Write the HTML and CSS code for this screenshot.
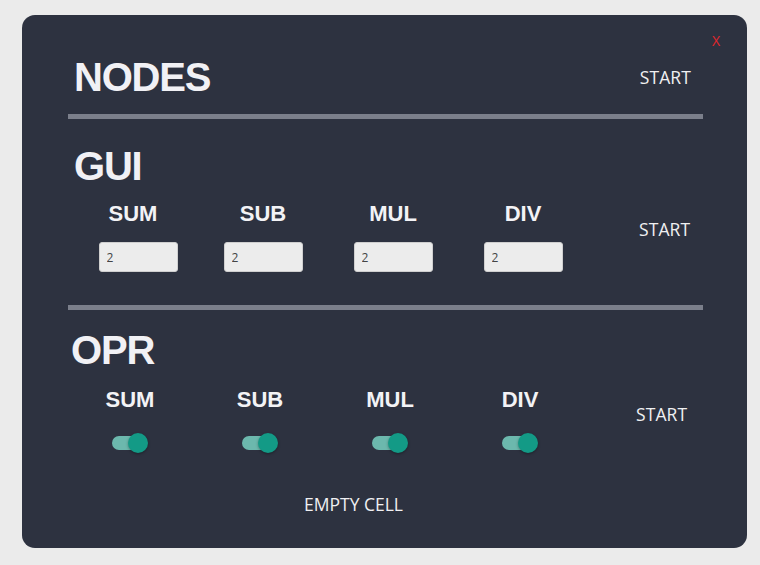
FILE: index.html
```html
<!DOCTYPE html>
<html>
<head>
<meta charset="utf-8">
<link rel="stylesheet" href="styles.css">
</head>
<body>
<div class="panel">
  <span class="close">X</span>
  <div class="header">
    <h1 class="title title--nodes">NODES</h1>
    <span class="start">START</span>
  </div>
  <div class="divider"></div>
  <section class="section section--gui">
    <h2 class="title">GUI</h2>
    <div class="grid">
      <div class="label">SUM</div>
      <div class="label">SUB</div>
      <div class="label">MUL</div>
      <div class="label">DIV</div>
      <span class="start start--grid">START</span>
      <div class="cell cell--first"><input class="num" type="text" value="2"></div>
      <div class="cell"><input class="num" type="text" value="2"></div>
      <div class="cell"><input class="num" type="text" value="2"></div>
      <div class="cell"><input class="num" type="text" value="2"></div>
    </div>
  </section>
  <div class="divider divider--second"></div>
  <section class="section section--opr">
    <h2 class="title">OPR</h2>
    <div class="grid grid--opr">
      <div class="label">SUM</div>
      <div class="label">SUB</div>
      <div class="label">MUL</div>
      <div class="label">DIV</div>
      <span class="start start--grid start--opr">START</span>
      <div class="cell"><span class="toggle"><span class="knob"></span></span></div>
      <div class="cell"><span class="toggle"><span class="knob"></span></span></div>
      <div class="cell"><span class="toggle"><span class="knob"></span></span></div>
      <div class="cell"><span class="toggle"><span class="knob"></span></span></div>
    </div>
    <div class="empty">EMPTY CELL</div>
  </section>
</div>
</body>
</html>
```
FILE: styles.css
```css
html, body {
  margin: 0;
  padding: 0;
  background: #ebebeb;
}
.panel {
  position: relative;
  box-sizing: border-box;
  margin: 15px 0 0 22px;
  width: 725px;
  height: 533px;
  background: #2d3240;
  border-radius: 13px;
  padding: 42px 44px 0 46px;
  color: #f2f2f4;
}
.close {
  position: absolute;
  left: 690px;
  top: 16px;
  font-family: "Open Sans", sans-serif;
  font-size: 14px;
  color: #e3262c;
}
.header {
  display: flex;
  align-items: center;
  height: 40px;
}
.title {
  margin: 0;
  font-family: "Liberation Sans", Arial, sans-serif;
  font-weight: bold;
  font-size: 40px;
  line-height: 40px;
  letter-spacing: -1.2px;
  color: #f1f1f5;
}
.title--nodes {
  margin-left: 6px;
  flex: 1;
}
.start {
  font-family: "Open Sans", sans-serif;
  font-size: 17.5px;
  color: #f0f0f2;
  letter-spacing: 0.1px;
}
.header .start {
  margin-right: 12px;
}
.divider {
  height: 5px;
  background: #7b7f8b;
  margin-top: 17px;
}
.section--gui {
  margin-top: 27px;
}
.section--gui .title {
  margin-left: 6px;
}
.divider--second {
  margin-top: 33px;
}
.section--opr {
  margin-top: 20px;
  margin-left: -3px;
}
.section--opr .title {
  margin-left: 6px;
}
.grid {
  display: grid;
  grid-template-columns: 130px 130px 130px 130px 1fr;
  grid-template-rows: 24px auto;
  row-gap: 16px;
  margin-top: 16px;
}
.grid--opr {
  margin-top: 18px;
  row-gap: 21px;
}
.label {
  text-align: center;
  font-family: "Liberation Sans", Arial, sans-serif;
  font-weight: bold;
  font-size: 22px;
  line-height: 24px;
  color: #f3f3f6;
}
.start--grid {
  grid-column: 5;
  grid-row: 1 / span 2;
  align-self: start;
  margin-top: 15px;
  padding-left: 51px;
}
.start--opr {
  margin-top: 14px;
}
.cell {
  display: flex;
  justify-content: center;
}
.cell--first {
  padding-left: 10px;
}
.num {
  box-sizing: border-box;
  width: 79px;
  height: 30px;
  margin: 0;
  padding: 0 0 0 7px;
  background: #ececec;
  border: 1px solid #cfcfcf;
  border-radius: 3px;
  font-family: "Open Sans", sans-serif;
  font-size: 12px;
  color: #444;
}
.toggle {
  position: relative;
  display: block;
  width: 36px;
  height: 20px;
}
.toggle::before {
  content: "";
  position: absolute;
  left: 0;
  top: 3px;
  width: 30px;
  height: 14px;
  border-radius: 7px;
  background: #6cb8ad;
}
.knob {
  position: absolute;
  right: 0;
  top: 0;
  width: 20px;
  height: 20px;
  border-radius: 50%;
  background: #139a86;
  box-shadow: 0 1px 3px rgba(0, 0, 0, 0.35);
}
.empty {
  margin-top: 39px;
  margin-left: 239px;
  font-family: "Open Sans", sans-serif;
  font-size: 17.5px;
  color: #f0f0f2;
}
```
